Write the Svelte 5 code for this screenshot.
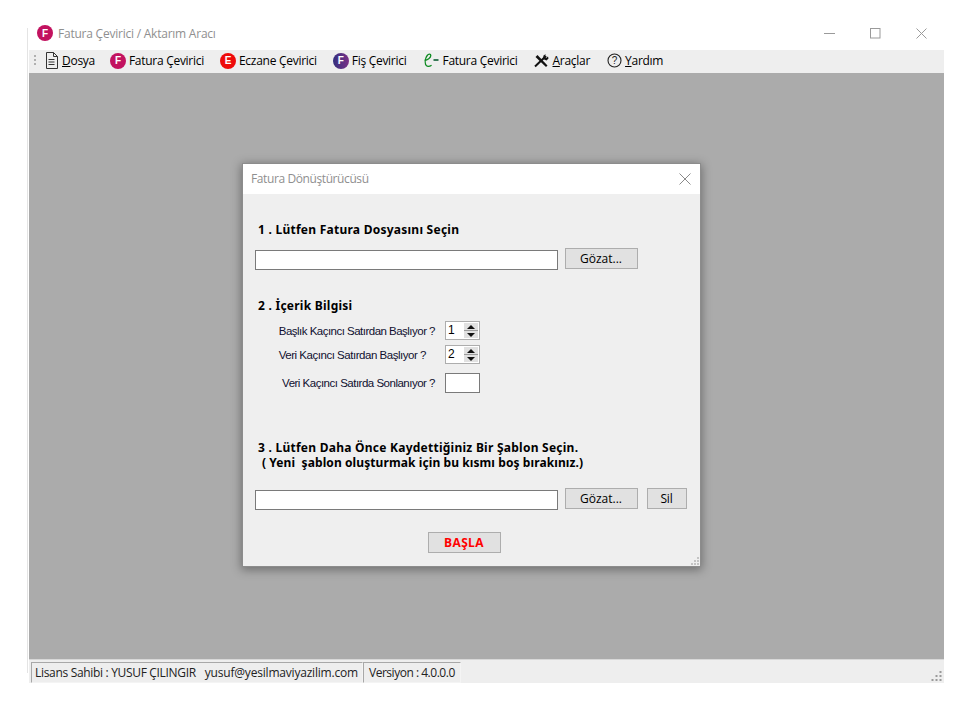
<script>
  const menu = [
    { type: 'doc', label: 'D', rest: 'osya', u: true },
    { type: 'f', color: 'pink', letter: 'F', label: 'Fatura Çevirici' },
    { type: 'f', color: 'red', letter: 'E', label: 'Eczane Çevirici' },
    { type: 'f', color: 'purple', letter: 'F', label: 'Fiş Çevirici' },
    { type: 'e', label: 'Fatura Çevirici' },
    { type: 'tools', label: 'A', rest: 'raçlar', u: true },
    { type: 'help', label: 'Y', rest: 'ardım', u: true }
  ];
</script>

<div class="window">
  <header class="titlebar">
    <span class="badge pink title-badge">F</span>
    <span class="title">Fatura Çevirici / Aktarım Aracı</span>
    <div class="controls">
      <svg width="11" height="11" viewBox="0 0 11 11"><path d="M0 5.5h11" stroke="#9a9a9a" fill="none"/></svg>
      <svg width="11" height="11" viewBox="0 0 11 11"><rect x=".5" y=".5" width="9.5" height="9.5" stroke="#9a9a9a" fill="none"/></svg>
      <svg width="11" height="11" viewBox="0 0 11 11"><path d="M.5.5l10 10M10.5.5l-10 10" stroke="#9a9a9a" fill="none"/></svg>
    </div>
  </header>

  <nav class="menubar">
    <span class="grip"></span>
    {#each menu as m}
      <span class="item {m.type}-item {m.color ?? ''}-item">
        {#if m.type === 'doc'}
          <svg width="13" height="17" viewBox="0 0 13 17"><path d="M1.5.5h7l4 4v12h-11zM8.500.5v4h4M3.500 7.500h6M3.500 10h6M3.500 12.500h6" fill="none" stroke="#333"/></svg>
        {:else if m.type === 'f'}
          <span class="badge {m.color}">{m.letter}</span>
        {:else if m.type === 'e'}
          <svg width="16" height="15" viewBox="0 0 16 15"><path d="M1.500 7.500C4.500 7 7.800 4.800 7.800 2.500 7.800.8 5.500.7 4.200 2.500 2.500 4.800 1.700 9 2.600 11.500c.8 2.300 3.400 2.500 6 .8" fill="none" stroke="#0c8a20" stroke-width="1.300"/><path d="M10.500 7h5" stroke="#0a5a30" stroke-width="1.600"/></svg>
        {:else if m.type === 'tools'}
          <svg width="15" height="14" viewBox="0 0 15 14"><path d="M1 12.500L12 2" stroke="#111" stroke-width="2" fill="none"/><path d="M1.500 3L3.500 1 13.500 11.500 12 13z" fill="#111"/><path d="M9.500 1.500L11.800 0 10.500 2.500 12 4 14 2.500 14.500 4.500 12.500 6.500 9 5z" fill="#111"/></svg>
        {:else}
          <svg width="15" height="15" viewBox="0 0 15 15"><circle cx="7.500" cy="7.500" r="6.500" fill="none" stroke="#222" stroke-width="1.100"/><text x="7.500" y="11" text-anchor="middle" class="q">?</text></svg>
        {/if}
        <span class="label">{#if m.u}<u>{m.label}</u>{m.rest}{:else}{m.label}{/if}</span>
      </span>
    {/each}
  </nav>

  <main class="mdi">
    <section class="dialog">
      <div class="dialog-title">
        <span>Fatura Dönüştürücüsü</span>
        <svg width="12" height="12" viewBox="0 0 12 12"><path d="M.5.5l11 11M11.500.5l-11 11" stroke="#8a8a8a" fill="none"/></svg>
      </div>
      <div class="dialog-body">
        <h3 class="h1">1 . Lütfen Fatura Dosyasını Seçin</h3>
        <div class="file-row r1">
          <div class="field"></div>
          <button>Gözat...</button>
        </div>

        <h3 class="h2">2 . İçerik Bilgisi</h3>
        <div class="spin-row s1">
          <span class="lbl">Başlık Kaçıncı Satırdan Başlıyor ?</span>
          <div class="spin"><span class="val">1</span><span class="arrows"><i class="up"></i><i class="down"></i></span></div>
        </div>
        <div class="spin-row s2">
          <span class="lbl">Veri Kaçıncı Satırdan Başlıyor ?</span>
          <div class="spin"><span class="val">2</span><span class="arrows"><i class="up"></i><i class="down"></i></span></div>
        </div>
        <div class="spin-row s3">
          <span class="lbl">Veri Kaçıncı Satırda Sonlanıyor ?</span>
          <div class="box"></div>
        </div>

        <h3 class="h3"><span class="h3a">3 . Lütfen Daha Önce Kaydettiğiniz Bir Şablon Seçin.</span><span class="h3b">( Yeni &nbsp;şablon oluşturmak için bu kısmı boş bırakınız.)</span></h3>
        <div class="file-row r2">
          <div class="field"></div>
          <button>Gözat...</button>
          <button class="sil">Sil</button>
        </div>
        <div class="start"><button class="basla">BAŞLA</button></div>
      </div>
      <svg class="dialog-grip" width="9" height="9" viewBox="0 0 9 9"><path d="M7 1h2v2H7zM4 4h2v2H4zM7 4h2v2H7zM1 7h2v2H1zM4 7h2v2H4zM7 7h2v2H7z" fill="#c4c4c4"/></svg>
    </section>
  </main>

  <footer class="statusbar">
    <span class="cell c1"><span class="owner">Lisans Sahibi : YUSUF ÇILINGIR</span><span class="mail">yusuf@yesilmaviyazilim.com</span></span>
    <span class="cell c2">Versiyon : 4.0.0.0</span>
    <svg class="status-grip" width="11" height="11" viewBox="0 0 11 11"><path d="M8.500 1h2v2h-2zM4.500 5h2v2h-2zM8.500 5h2v2h-2zM.5 9h2v2h-2zM4.500 9h2v2h-2zM8.500 9h2v2h-2z" fill="#9a9a9a"/></svg>
  </footer>
</div>

<style>
  :global(body) { margin: 0; background: #fff; }
  .window {
    width: 915px;
    height: 665px;
    margin: 18px 0 0 29px;
    display: flex;
    flex-direction: column;
    font-family: "Open Sans", "Noto Sans", sans-serif;
    font-size: 12px;
    color: #000;
    position: relative;
  }
  .window::before { content: ""; position: absolute; left: -2px; top: 10px; bottom: 10px; width: 1px; background: #e4e4e4; }
  .titlebar { height: 32px; display: flex; align-items: center; background: #fff; flex: none; padding-bottom: 2px; box-sizing: border-box; }
  .title-badge { margin-left: 8px; margin-right: 5px; }
  .title { color: #8f8f8f; font-size: 12px; letter-spacing: -.23px; }
  .controls { margin-left: auto; display: flex; gap: 35px; margin-right: 17px; align-items: center; }

  .badge {
    width: 16px; height: 16px; border-radius: 50%; flex: none;
    display: inline-flex; align-items: center; justify-content: center;
    color: #fff; font: bold 10px "Liberation Sans", sans-serif;
  }
  .pink { background: #c2125f; }
  .red { background: #ee0a0a; }
  .purple { background: linear-gradient(90deg, #33307e, #7a2f86); }

  .menubar { height: 23px; background: #eeeeee; display: flex; align-items: center; flex: none; padding-bottom: 2px; box-sizing: border-box; }
  .grip { width: 2px; height: 12px; margin-left: 5px; margin-right: 9px; background: repeating-linear-gradient(#b0b0b0 0 2px, transparent 2px 4px); }
  .item { display: inline-flex; align-items: center; gap: 3px; white-space: nowrap; letter-spacing: -.28px; }
  .doc-item { margin-right: 15px; gap: 4px; }
  .f-item { margin-right: 16px; }
  .purple-item { margin-right: 17px; }
  .e-item { margin-right: 16px; gap: 3px; }
  .tools-item { margin-right: 17px; gap: 4px; }
  .help-item { gap: 3px; }
  .q { font: 10px "Liberation Sans", sans-serif; fill: #222; letter-spacing: 0; }

  .mdi { flex: 1; background: #ababab; position: relative; }
  .dialog {
    position: absolute; left: 214px; top: 91px;
    width: 457px; height: 402px;
    background: #efefef;
    box-shadow: 0 0 0 1px #8c8c8c, 0 2px 9px 2px rgba(0,0,0,.35);
    display: flex; flex-direction: column;
  }
  .dialog-title {
    height: 30px; background: #fff; flex: none; box-sizing: border-box;
    display: flex; align-items: center; justify-content: space-between;
    padding: 0 9px 1px 8px; color: #8f8f8f; font-size: 12px; letter-spacing: -.4px;
  }
  .dialog-body { flex: 1; padding-left: 12px; }
  h3 { margin: 0; font: bold 12px/14px "Noto Sans", sans-serif; letter-spacing: .25px; }
  .h1 { margin: 29px 0 0 3px; }
  .h2 { margin: 29px 0 0 3px; }
  .h3 { margin: 48px 0 0 3px; display: flex; flex-direction: column; white-space: nowrap; }
  .h3a, .h3b { line-height: 13px; }
  .h3b { margin-left: 4px; margin-top: 2px; letter-spacing: .09px; }

  .file-row { display: flex; align-items: flex-start; }
  .r1 { margin-top: 11px; }
  .r2 { margin-top: 19px; }
  .field { width: 301px; height: 18px; margin-top: 2px; background: #fff; border: 1px solid #7a7a7a; }
  button {
    font: 12px "Open Sans", sans-serif; color: #000; letter-spacing: 0;
    width: 73px; height: 21px; padding: 0 1px 0 0; margin-left: 7px;
    background: #e1e1e1; border: 1px solid #adadad;
  }
  .sil { width: 40px; margin-left: 9px; letter-spacing: -.2px; }
  .start { margin: 22px 0 0 173px; }
  .basla { margin: 0; color: #f00; font-weight: bold; font-size: 12px; letter-spacing: .35px; }

  .spin-row { display: flex; align-items: center; height: 19px; width: 225px; justify-content: flex-end; }
  .s1 { margin-top: 8px; }
  .s2 { margin-top: 5px; }
  .s3 { margin-top: 9px; height: 20px; }
  .lbl { font: 11.5px "Liberation Sans", sans-serif; letter-spacing: -.52px; margin-right: 10px; color: #101030; white-space: nowrap; }
  .s2 .lbl { margin-right: 19px; letter-spacing: -.47px; }
  .s3 .lbl { letter-spacing: -.5px; }
  .spin, .box { width: 33px; height: 17px; background: #fff; border: 1px solid #adadad; display: flex; flex: none; }
  .box { height: 18px; border-color: #7a7a7a; }
  .val { flex: 1; padding-left: 2px; font: 12px/17px "Liberation Sans", sans-serif; }
  .arrows { width: 14px; margin: 1px; display: flex; flex-direction: column; gap: 1px; }
  .arrows i { flex: 1; background: #e1e1e1; display: flex; align-items: center; justify-content: center; }
  .arrows i + i { box-shadow: 0 -1px 0 #9c9c9c; }
  .arrows i::after { content: ""; border-left: 4px solid transparent; border-right: 4px solid transparent; }
  .up::after { border-bottom: 4px solid #111; }
  .down::after { border-top: 4px solid #111; }
  .dialog-grip { position: absolute; right: 1px; bottom: 1px; }

  .statusbar { height: 24px; background: #eeeeee; flex: none; display: flex; align-items: flex-start; padding: 3px 0 0 2px; position: relative; box-shadow: inset 0 1px 0 #d8d8d8; box-sizing: border-box; font-size: 12px; letter-spacing: -.22px; color: #222; }
  .cell { height: 19px; border: 1px solid #a8a8a8; border-right-color: #f4f4f4; border-bottom-color: #f4f4f4; display: flex; align-items: center; white-space: nowrap; line-height: 19px; }
  .c1 { width: 327px; padding-left: 3px; }
  .owner { letter-spacing: -.32px; }
  .mail { margin-left: 9px; letter-spacing: -.2px; }
  .c2 { margin-left: 0; width: 91px; padding-left: 5px; letter-spacing: -.48px; }
  .status-grip { position: absolute; right: 2px; bottom: 2px; }
</style>
